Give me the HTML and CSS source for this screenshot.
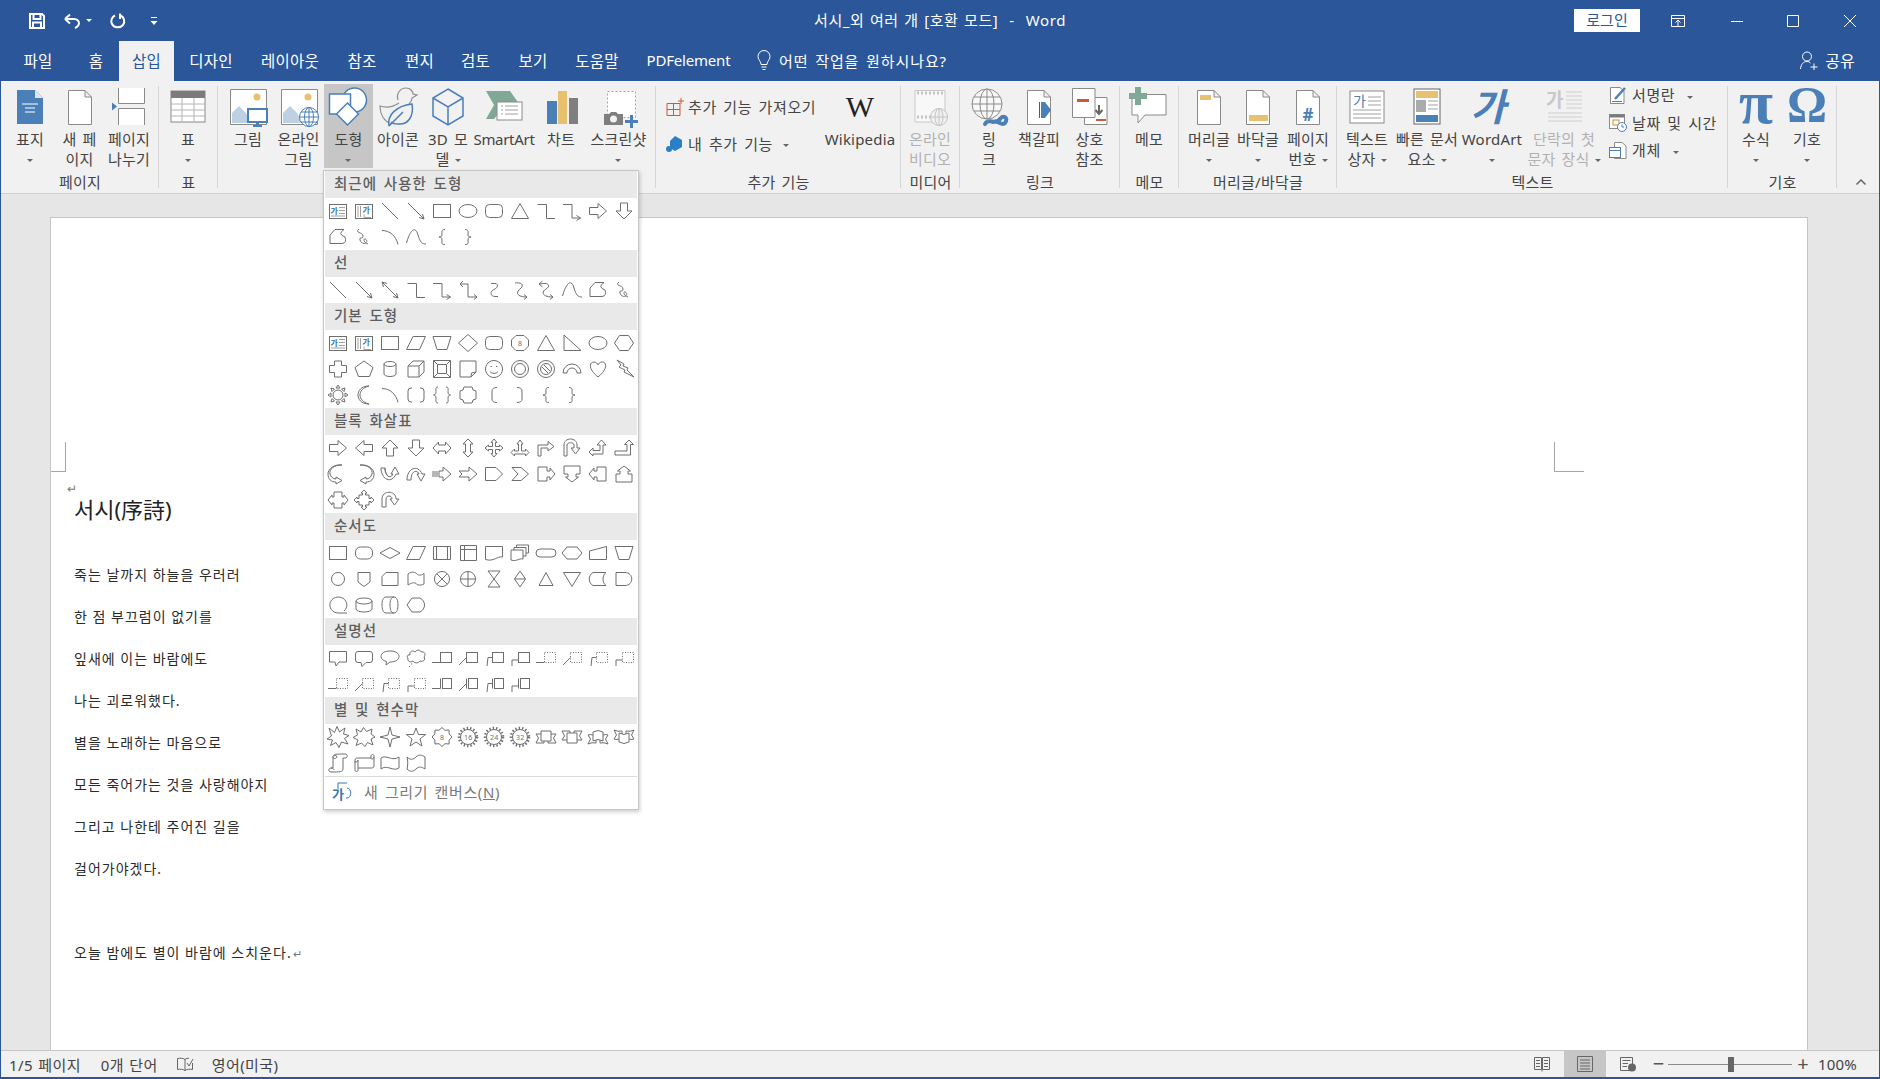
FILE: index.html
```html
<!DOCTYPE html>
<html lang="ko">
<head>
<meta charset="utf-8">
<title>서시_외 여러 개 [호환 모드] - Word</title>
<link rel="stylesheet" href="styles.css">
</head>
<body>
<svg class="defs" xmlns="http://www.w3.org/2000/svg"><defs>
<g id="tb"><rect x="4.5" y="6.5" width="17" height="14" fill="#fff"/><text class="gt" x="5.5" y="15.5">가</text><path class="thin" d="M14 9.5h6M14 12.5h6M14 15.5h6M6 18h14"/></g>
<g id="vtb"><rect x="4.5" y="6.5" width="17" height="14" fill="#fff"/><text class="gt" x="11.5" y="14.5">가</text><path class="thin" d="M7 8v11M9.5 8v11M13 16.500v3h7"/></g>
<path id="line" d="M5 5L21 21"/>
<path id="arrow" d="M5 5L21 21M21 21l-1.500-5M21 21l-5-1.500"/>
<path id="dbl" d="M5 5L21 21M21 21l-1.500-5M21 21l-5-1.500M5 5l1.500 5M5 5l5 1.500"/>
<rect id="rect" x="4.500" y="6.500" width="17" height="13"/>
<ellipse id="ell" cx="13" cy="13" rx="9" ry="6.500"/>
<rect id="rr" x="4.500" y="6.500" width="17" height="13" rx="4"/>
<path id="tri" d="M13 5.500L21.500 20.500H4.500Z"/>
<path id="elb" d="M4.500 6.500H13.500V20.500H22"/>
<path id="elba" d="M4 6.500H13V20H21.500M21.500 20l-4-2.500M21.500 20l-4 2.500"/>
<path id="elbd" d="M5 7H13V20H22M5 7l3-3M5 7l3 3M22 20l-3-2.500M22 20l-3 2.500"/>
<path id="rar" d="M4.500 9.500H13V5.500L21.500 13L13 20.500V16.500H4.500Z"/>
<path id="lar" d="M21.500 9.500H13V5.500L4.500 13L13 20.500V16.500H21.500Z"/>
<path id="uar" d="M9.500 21H16.500V13H21L13 5L5 13H9.500Z"/>
<path id="dar" d="M9.500 5H16.500V13H21L13 21L5 13H9.500Z"/>
<path id="free" d="M5 19.500V11L10 5.500H19Q12 10 20 13Q22 19 17 19.500Z"/>
<path id="scr" d="M8 5C3 9 12 8 12 12C12 16 8 12 9 16C11 22 18 19 15 15.500C13 13 11 18 17 20"/>
<path id="arc" d="M5 6.500C13 6.500 19 12 21 20.500"/>
<path id="cur" d="M3.500 19C8 3 13 3 15 11C17 18 19 20 23 20"/>
<path id="lb" d="M16 5.500C12 5.500 13 8 13 11C13 12.500 12 13 10 13C12 13 13 14 13 16C13 19 12 20.500 16 20.500"/>
<path id="rb" d="M10 5.500C14 5.500 13 8 13 11C13 12.500 14 13 16 13C14 13 13 14 13 16C13 19 14 20.500 10 20.500"/>
<path id="cc" d="M10 6.500H14C18 6.500 17 11 13 12.500C9 14 9 19.500 14 19.500H17"/>
<path id="cca" d="M8 6C16 5 17 9 13 12C9 15 9 20 20 20M20 20l-3-2.500M20 20l-3 2.500"/>
<path id="ccd" d="M7 7C16 5 18 9 13 12C8 15 9 20 20 20M20 20l-3-2.500M20 20l-3 2.500M6 7l3.500-3M6 7l3.500 3"/>
<path id="para" d="M10 6.500H22.500L16.500 19.500H3.500Z"/>
<path id="trap" d="M4 6.500H22L18 19.500H8Z"/>
<path id="dia" d="M13 4.500L22.500 13L13 21.500L3.500 13Z"/>
<g id="oct"><path d="M9 5.500H17L21.500 10V16L17 20.500H9L4.500 16V10Z"/><text class="nt" x="11" y="16">8</text></g>
<path id="rtri" d="M5 5V20.500H22Z"/>
<path id="hex" d="M8.500 5.500H17.500L22.500 13L17.500 20.500H8.500L3.500 13Z"/>
<path id="cross" d="M9.500 5H16.500V9.500H21.500V16.500H16.500V21H9.500V16.500H4.500V9.500H9.500Z"/>
<path id="pent" d="M13 5L22 11.500L18.500 20.500H7.500L4 11.500Z"/>
<path id="can" d="M7 8A6 2.500 0 0 1 19 8V18A6 2.500 0 0 1 7 18ZM7 8A6 2.500 0 0 0 19 8"/>
<path id="cube" d="M5 10L10 5H21V16L16 21H5ZM5 10H16V21M16 10L21 5"/>
<path id="bev" d="M4.500 4.500H21.500V21.500H4.500ZM8.500 8.500H17.500V17.500H8.500ZM4.500 4.500L8.500 8.500M21.500 4.500L17.500 8.500M4.500 21.500L8.500 17.500M21.500 21.500L17.500 17.500"/>
<path id="fold" d="M5 5H21V16L16 21H5ZM21 16L16.500 17L16 21"/>
<path id="smile" d="M13 4.500A8.500 8.500 0 1 1 12.990 4.500ZM9 15.500C11 18 15 18 17 15.500M9.500 10.500h1.500M15 10.500h1.500"/>
<g id="donut"><circle cx="13" cy="13" r="8.500"/><circle cx="13" cy="13" r="5.500"/></g>
<g id="nosym"><circle cx="13" cy="13" r="8.500"/><circle cx="13" cy="13" r="5.500"/><path d="M9 11L15 17M11 9L17 15"/></g>
<path id="barc" d="M4 17A9 9 0 0 1 22 17H18A5 5 0 0 0 8 17Z"/>
<path id="heart" d="M13 21C3 13 4 6 9 6C11 6 13 8 13 9C13 8 15 6 17 6C22 6 23 13 13 21Z"/>
<path id="bolt" d="M6 4L13 8L12 10L17 12L16 14L23 21L13 16L14 14L8 11L10 9Z"/>
<g id="sun"><circle cx="13" cy="13" r="5"/><path d="M13 3l-2 3h4ZM13 23l-2-3h4ZM3 13l3-2v4ZM23 13l-3-2v4ZM6 6l1 3.500L9.500 7ZM20 6l-1 3.500L16.500 7ZM6 20l1-3.500L9.500 19ZM20 20l-1-3.500L16.500 19Z"/></g>
<path id="moon" d="M18 4C6 7 6 19 18 22C10 22 7 17 7 13C7 9 10 4 18 4Z"/>
<path id="bp" d="M9 6H8Q5 6 5 9V17Q5 20 8 20H9M17 6H18Q21 6 21 9V17Q21 20 18 20H17"/>
<path id="bcp" d="M9 5C6 5 7 8 7 10C7 12 6 13 4.500 13C6 13 7 14 7 16C7 18 6 21 9 21M17 5C20 5 19 8 19 10C19 12 20 13 21.500 13C20 13 19 14 19 16C19 18 20 21 17 21"/>
<path id="plq" d="M9 5H17Q17 9 21 9V17Q17 17 17 21H9Q9 17 5 17V9Q9 9 9 5Z"/>
<path id="lbk" d="M16 5.500Q11 5.500 11 9V17Q11 20.500 16 20.500"/>
<path id="rbk" d="M10 5.500Q15 5.500 15 9V17Q15 20.500 10 20.500"/>
<path id="lra" d="M4 13L9.500 7V10H16.500V7L22 13L16.500 19V16H9.500V19Z"/>
<path id="uda" d="M13 4L18 9H15.500V17H18L13 22L8 17H10.500V9H8Z"/>
<path id="quad" d="M13 4L16 7.500H14.500V11.500H18.500V10L22 13L18.500 16V14.500H14.500V18.500H16L13 22L10 18.500H11.500V14.500H7.500V16L4 13L7.500 10V11.500H11.500V7.500H10Z"/>
<path id="lru" d="M13 5L16 9H14.500V16H18.500V14L22 17.500L18.500 21V19H7.500V21L4 17.500L7.500 14V16H11.500V9H10Z"/>
<path id="bent" d="M5 21V10H15V6.500L21 11.500L15 16V13H8V21Z"/>
<path id="ut" d="M5 21V10C5 2 18 2 18 10V13H21L16.500 19L12 13H15V10C15 7 8 7 8 10V21Z"/>
<path id="lu" d="M4 17L8 13V15.500H15V10H12L16.500 5L21 10H18V19H8V21Z"/>
<path id="bu" d="M4 16H16V9.500H13.500L18 5L22.500 9.500H19.500V20H4Z"/>
<path id="cr" d="M17 4C9 4 4 8 5 13C6 16 8 18 11 18V16L17 19.500L11 23V21C6 21 3 18 3 13C3 8 9 3 17 4Z"/>
<path id="cl" d="M9 4C17 4 22 8 21 13C20 16 18 18 15 18V16L9 19.500L15 23V21C20 21 23 18 23 13C23 8 17 3 9 4Z"/>
<path id="cu" d="M4 7C4 19 15 23 19 13H22L18 6L14 13H16C14 18 8 16 8 7ZM8 7C8 12 10 14 12 16"/>
<path id="cd" d="M4 19C4 7 15 3 19 13H22L18 20L14 13H16C14 8 8 10 8 19Z"/>
<path id="str" d="M4 10V16M6 10V16M8 10V16M10 10H14V6L22 13L14 20V16H10Z"/>
<path id="not" d="M4 10H14V6L22 13L14 20V16H4L7 13Z"/>
<path id="hmp" d="M4.500 6.500H15L21.500 13L15 19.500H4.500Z"/>
<path id="chv" d="M5 6.500H14L21.500 13L14 19.500H5L11 13Z"/>
<path id="rc" d="M5 6H14V10H17V7L22 13L17 19V16H14V20H5Z"/>
<path id="dc" d="M5 5H21V13H17V16H19.500L13 21L6.500 16H9V13H5Z"/>
<path id="lc" d="M21 6H12V10H9V7L4 13L9 19V16H12V20H21Z"/>
<path id="uc" d="M5 21H21V13H17V10H19.500L13 5L6.500 10H9V13H5Z"/>
<path id="lrc" d="M9 5H17V10H19V8L23 13L19 18V16H17V21H9V16H7V18L3 13L7 8V10H9Z"/>
<path id="qc" d="M13 3L16 6H14.500V8H18V11.500H20V10L23 13L20 16V14.500H18V18H14.500V20H16L13 23L10 20H11.500V18H8V14.500H6V16L3 13L6 10V11.500H8V8H11.500V6H10Z"/>
<path id="ca" d="M5 20V12C5 3 19 3 19 12H22L17.500 18L13 12H15C15 8 9 8 9 12V20Z"/>
<rect id="frr" x="4.500" y="7" width="17" height="12" rx="5"/>
<path id="fd" d="M3 13L13 7.500L23 13L13 18.500Z"/>
<path id="pre" d="M4.500 6.500H21.500V19.500H4.500ZM7.500 6.500V19.500M18.500 6.500V19.500"/>
<path id="int" d="M5.500 5.500H21.500V20.500H5.500ZM5.500 9.500H21.500M9.500 5.500V20.500"/>
<path id="doc" d="M4.500 6.500H21.500V17C16 16 13 22 4.500 19.500Z"/>
<path id="mdoc" d="M4 10H16V19C12 18 9 22 4 20ZM7 10V7.500H19V16H16M9.500 7.500V5H21.500V13H19"/>
<rect id="term" x="3" y="9" width="20" height="8" rx="4"/>
<path id="prep" d="M8 7H18L23 13L18 19H8L3 13Z"/>
<path id="mi" d="M4.500 11L21.500 6.500V19.500H4.500Z"/>
<circle id="conn" cx="13" cy="13" r="6.500"/>
<path id="off" d="M7 6.500H19V16L13 20.500L7 16Z"/>
<path id="card" d="M9 6.500H21V19.500H5V10.500Z"/>
<path id="tape" d="M5 8C9 5 12 6 14 8C16 10 19 9 21 7.500V18C17 20 14 19 13 17.500C11 16 8 17 5 19Z"/>
<path id="sum" d="M13 5.500A7.500 7.500 0 1 1 12.990 5.500ZM7.700 7.700L18.300 18.300M18.300 7.700L7.700 18.300"/>
<path id="or" d="M13 5.500A7.500 7.500 0 1 1 12.990 5.500ZM13 5.500V20.500M5.500 13H20.500"/>
<path id="col" d="M7 5H19L7 21H19Z"/>
<path id="sort" d="M13 5L18.500 13L13 21L7.500 13ZM7.500 13H18.500"/>
<path id="ext" d="M13 6.500L20 19.500H6Z"/>
<path id="mrg" d="M4.500 6.500H21.500L13 20.500Z"/>
<path id="sto" d="M8 6.500H21C17 9 17 17 21 19.500H8C3 17 3 9 8 6.500Z"/>
<path id="del" d="M5 6.500H14C23 6.500 23 19.500 14 19.500H5Z"/>
<path id="seq" d="M19 19A8.500 8 0 1 0 13 21H22"/>
<path id="dsk" d="M5 9A8 3 0 0 1 21 9V17A8 3 0 0 1 5 17ZM5 9A8 3 0 0 0 21 9"/>
<path id="dir" d="M9 5H17C20 5 21 9 21 13C21 17 20 21 17 21H9C6 21 5 17 5 13C5 9 6 5 9 5ZM17 5C14 5 13 9 13 13C13 17 14 21 17 21"/>
<path id="dsp" d="M9 6H17C23 9 23 17 17 20H9L4 13Z"/>
<path id="wr" d="M4.500 6.500H21.500V17H14L11 21L10 17H4.500Z"/>
<path id="wrr" d="M7 6.500H19Q21.500 6.500 21.500 9V15Q21.500 17.500 19 17.500H15L11 21.500L10 17.500H7Q4.500 17.500 4.500 15V9Q4.500 6.500 7 6.500Z"/>
<path id="wo" d="M13 6C19 6 22 8.500 22 11.500C22 15 18 17 13 17L9 20L9.500 16.500C6 15.500 4 14 4 11.500C4 8.500 7 6 13 6Z"/>
<g id="cld"><path d="M7 10C6 6 10 5 12 7C14 4 18 5 18 7C22 6 23 10 21 12C23 15 20 17 17 16C15 19 11 18 10 16C7 18 4 16 5 13C3 12 5 9 7 10Z"/><path d="M8 19h1M6 21.500h1"/></g>
<g id="l1"><rect x="11.500" y="7.500" width="11" height="10"/><path d="M3 17.500H11.500"/></g>
<g id="l2"><rect x="11.500" y="7.500" width="11" height="10"/><path d="M4 20L11.500 12.500"/></g>
<g id="l3"><rect x="11.500" y="7.500" width="11" height="10"/><path d="M6 21L7 12.500H11.500"/></g>
<g id="l4"><rect x="11.500" y="7.500" width="11" height="10"/><path d="M5 21V15H11.500"/></g>
<g id="d1"><rect class="dot" x="11.500" y="7.500" width="11" height="10"/><path d="M3 17.500H11.500"/></g>
<g id="d2"><rect class="dot" x="11.500" y="7.500" width="11" height="10"/><path d="M4 20L11.500 12.500"/></g>
<g id="d3"><rect class="dot" x="11.500" y="7.500" width="11" height="10"/><path d="M6 21L7 12.500H11.500"/></g>
<g id="d4"><rect class="dot" x="11.500" y="7.500" width="11" height="10"/><path d="M5 21V15H11.500"/></g>
<g id="a1"><rect x="13.500" y="7.500" width="9" height="10"/><path d="M11.500 7.500V17.500M3 17.500H11.500"/></g>
<g id="a2"><rect x="13.500" y="7.500" width="9" height="10"/><path d="M11.500 7.500V17.500M4 20L11.500 12.500"/></g>
<g id="a3"><rect x="13.500" y="7.500" width="9" height="10"/><path d="M11.500 7.500V17.500M6 21L7 12.500H11.500"/></g>
<g id="a4"><rect x="13.500" y="7.500" width="9" height="10"/><path d="M11.500 7.500V17.500M5 21V15H11.500"/></g>
<path id="e1" d="M4 4L9.500 8.500L12 2.500L14.500 8L20 4L18.500 10L24 11.500L19.500 14.500L23 20L16.500 18L14 23.500L11 18.500L5.500 21.500L7.500 16L2 15L6.500 12Z"/>
<path id="e2" d="M5 5L10 8L12.500 3.500L15.500 7.500L21 5L20 10L24 13L20 15L22 21L16.500 18.500L14 22.500L10.500 19L5 21.500L7 16L2 13.500L6.500 11Z"/>
<path id="s4" d="M13 3L15 11L23 13L15 15L13 23L11 15L3 13L11 11Z"/>
<path id="s5" d="M13 4L15.500 10.500H22.500L17 15L19 22L13 18L7 22L9 15L3.500 10.500H10.500Z"/>
<g id="s8"><path d="M13 3.500L16 6.300L20 6L20.200 10L23 13L20.200 16L20 20L16 19.700L13 22.500L10 19.700L6 20L5.800 16L3 13L5.800 10L6 6L10 6.300Z"/><text class="nt" x="11" y="16">8</text></g>
<g id="s16"><circle cx="13" cy="13" r="7.500"/><circle class="ring" cx="13" cy="13" r="9"/><text class="nt" x="9" y="16">16</text></g>
<g id="s24"><circle cx="13" cy="13" r="7.500"/><circle class="ring" cx="13" cy="13" r="9"/><text class="nt" x="9" y="16">24</text></g>
<g id="s32"><circle cx="13" cy="13" r="7.500"/><circle class="ring" cx="13" cy="13" r="9"/><text class="nt" x="9" y="16">32</text></g>
<path id="ru" d="M8 7H18V17H8ZM8 10H3L5.500 14L3 19H11V17M18 10H23L20.500 14L23 19H15V17"/>
<path id="rd" d="M8 9H18V19H8ZM8 16H3L5.500 12L3 7H11V9M18 16H23L20.500 12L23 7H15V9"/>
<path id="cru" d="M8 8Q13 5 18 8V17Q13 14 8 17ZM8 11Q5 10 3 11L5.500 15L3 20Q7 18 11 19V16M18 11Q21 10 23 11L20.500 15L23 20Q19 18 15 19V16"/>
<path id="crd" d="M8 9Q13 12 18 9V18Q13 21 8 18ZM8 15Q5 16 3 15L5.500 11L3 6Q7 8 11 7V10M18 15Q21 16 23 15L20.500 11L23 6Q19 8 15 7V10"/>
<path id="vs" d="M8 7C8 4 11 4 20 4C23 4 23 8 20 8H18V19C18 22 15 22 6 22C3 22 3 18 6 18H8ZM8 7C8 9 11 9 12 7C12 5.500 10 5 9 6M6 18C8 18 9 19 9 20"/>
<path id="hs" d="M4 10C4 8 6 8 8 8H20V6C20 4 23 4 23 6V16C23 18 21 18 19 18H7V20C7 22 4 22 4 20ZM20 8C20 10 23 9 23 7M4 11C4 13 7 12 7 10V18"/>
<path id="wav" d="M4 8C9 4 15 12 22 7V18C16 22 10 14 4 19Z"/>
<path id="dw" d="M4 7C7 10 10 10 13 7C16 4 19 5 22 7V19C19 17 16 16 13 19C10 22 7 22 4 19C5 15 5 11 4 7Z"/>
</defs></svg>

<div class="app">
  <header class="titlebar">
    <div class="qat">
      <svg class="q1" width="18" height="18" viewBox="0 0 18 18"><path class="wh2" d="M2 2H14L16 4V16H2ZM5.500 2V7H12.500V2M5 16V10.500H13V16"/></svg>
      <svg class="q2" width="20" height="18" viewBox="0 0 20 18"><path class="wh2" d="M3 7H12C16 7 17 10 17 11C17 14 15 15 13 16M3 7L8 2.500M3 7L8 11.500"/></svg>
      <i class="caret white q3"></i>
      <svg class="q4" width="18" height="18" viewBox="0 0 18 18"><path class="wh2" d="M6 3.500C2.500 5 1.500 9 3 12C5 16 11 16.500 14 13C16.500 9.500 15 5 11.500 3.500M11 1.500V7"/></svg>
      <svg class="q5" width="10" height="12" viewBox="0 0 10 12"><path class="wh" d="M2 2.500H8"/><path fill="#fff" d="M1.500 6H8.500L5 10Z"/></svg>
    </div>
    <div class="doctitle">서시_외 여러 개 [호환 모드]&nbsp; -&nbsp; Word</div>
    <div class="winctl">
      <button class="login">로그인</button>
      <svg class="w1" width="18" height="16" viewBox="0 0 18 16"><path class="wh" d="M2.500 2.500H15.500V13.500H2.500ZM3 5.500H15M9 13V7M6.500 9.500L9 7L11.500 9.500"/></svg>
      <svg class="w2" width="14" height="14" viewBox="0 0 14 14"><path class="wh" d="M1 7.500H13"/></svg>
      <svg class="w3" width="14" height="14" viewBox="0 0 14 14"><path class="wh" d="M1.500 1.500H12.500V12.500H1.500Z"/></svg>
      <svg class="w4" width="14" height="14" viewBox="0 0 14 14"><path class="wh" d="M1 1L13 13M13 1L1 13"/></svg>
    </div>
  </header>

  <nav class="tabs">
    <span class="tab t1">파일</span><span class="tab t2">홈</span><span class="tab t3 active">삽입</span><span class="tab t4">디자인</span><span class="tab t5">레이아웃</span><span class="tab t6">참조</span><span class="tab t7">편지</span><span class="tab t8">검토</span><span class="tab t9">보기</span><span class="tab t10">도움말</span><span class="tab t11">PDFelement</span>
    <span class="tell"><svg width="16" height="22" viewBox="0 0 16 22"><path class="wh" d="M5 15.500C5 12 2 11 2 7.500A6 6 0 0 1 14 7.500C14 11 11 12 11 15.500ZM5.500 18H10.500M6.500 20.500H9.500"/></svg>어떤 작업을 원하시나요?</span>
    <span class="share"><svg width="20" height="22" viewBox="0 0 20 22"><path class="wh" d="M8 3A4.500 4.500 0 0 1 8 12A4.500 4.500 0 0 1 8 3ZM1.500 20C2 15 4.500 12.500 8 12.500C9.500 12.500 10.500 13 11.500 14M15 14.500V21M11.500 18H18.500"/></svg>공유</span>
  </nav>

  <section class="ribbon">
    <div class="group g1">
      <div class="btns p4">
        <div class="btn b50"><svg class="ic" viewBox="0 0 48 45"><path fill="#4a7fb8" d="M11 6H29L37 14V40H11Z"/><path fill="#dfe8f2" d="M29 6L37 14H29Z"/><path class="wl" d="M16 20H32M19 24H29M19 28H29"/></svg><span class="lb">표지<br><i class="caret"></i></span></div>
        <div class="btn b49"><svg class="ic" viewBox="0 0 48 45"><path class="pg" d="M12.500 6.500H29L35.500 13V40.500H12.500ZM29 6.500V13H35.500"/></svg><span class="lb">새 페<br>이지</span></div>
        <div class="btn b50"><svg class="ic" viewBox="0 0 48 45"><path class="pg" d="M13.500 4V19.500H39.500V4M13.500 41V24.500H39.500V41"/><path fill="#4a7fb8" d="M7 18.500L12 22.500L7 26.500Z"/></svg><span class="lb">페이지<br>나누기</span></div>
      </div>
      <div class="gl">페이지</div>
    </div>
    <div class="group g2">
      <div class="btns">
        <div class="btn b58"><svg class="ic" viewBox="0 0 48 45"><rect x="7" y="7" width="34" height="31" fill="#fff" stroke="#8a8a8a"/><rect x="7" y="7" width="34" height="7" fill="#7b7b7b"/><path class="gr" d="M7 20H41M7 26H41M7 32H41M18 14V38M30 14V38"/></svg><span class="lb">표<br><i class="caret"></i></span></div>
      </div>
      <div class="gl">표</div>
    </div>
    <div class="group g3">
      <div class="btns p5">
        <div class="btn b50"><svg class="ic" viewBox="0 0 48 45"><path class="pg" d="M6.500 5.500H42.500V40.500H6.500Z"/><circle cx="33" cy="13" r="3.500" fill="#e8c170"/><path fill="#bdd0e4" d="M8 39V29L15 22L22 29L27 39Z"/><rect x="24" y="25" width="19" height="13" fill="#fff" stroke="#4a7fb8" stroke-width="2"/><path fill="#4a7fb8" d="M32 38h3v3h3v2H29v-2h3Z"/></svg><span class="lb">그림</span></div>
        <div class="btn b51"><svg class="ic" viewBox="0 0 48 45"><path class="pg" d="M6.500 5.500H42.500V40.500H6.500Z"/><circle cx="33" cy="13" r="3.500" fill="#e8c170"/><path fill="#bdd0e4" d="M8 39V29L15 22L22 29L27 39Z"/><g class="gb"><circle cx="34" cy="33" r="9.500" fill="#fff"/><ellipse cx="34" cy="33" rx="4.500" ry="9.500"/><path d="M24.500 33H43.500M26 28H42M26 38H42M34 23.500V42.500"/></g></svg><span class="lb">온라인<br>그림</span></div>
        <div class="btn b49 sel"><svg class="ic" viewBox="0 0 48 45"><g class="blue"><circle cx="29.500" cy="16" r="12" fill="#fff"/><rect x="4.500" y="10" width="21" height="20" fill="#fff"/><path fill="#fff" d="M22.500 19L33.500 30L22.500 41L11.500 30Z"/></g></svg><span class="lb">도형<br><i class="caret"></i></span></div>
        <div class="btn b50"><svg class="ic" viewBox="0 0 48 45"><path fill="none" stroke="#8f8f8f" stroke-width="1.200" d="M24 16C22 10 26 4 32 4C37 4 39 8 39 10L43 11L38 14C38 17 36 19 35 20M25 19C19 23 12 24 6 22C6 30 10 37 17 40"/><path fill="#f1f1f1" stroke="#4a7fb8" stroke-width="1.500" d="M15 42C13 31 22 22 38 20C40 31 35 41 24 40C21 40 18 39 17 38M15 42L29 28"/></svg><span class="lb">아이콘</span></div>
        <div class="btn b50"><svg class="ic" viewBox="0 0 48 45"><path class="blue" d="M24 5L39 14V32L24 41L9 32V14ZM9 14L24 23L39 14M24 23V41"/></svg><span class="lb">3D 모<br>델<i class="caret ml"></i></span></div>
        <div class="btn b62"><svg class="ic" viewBox="0 0 48 45"><path fill="#7fa896" d="M6 7H30L40 21H14L6 7ZM14 21H26L14 35H6Z"/><rect x="17" y="18" width="25" height="18" fill="#fff" stroke="#8a8a8a"/><path class="thin" d="M25 22H38M25 26H38M25 30H38M21 22H23M21 26H23M21 30H23"/></svg><span class="lb lat2">SmartArt</span></div>
        <div class="btn b52"><svg class="ic" viewBox="0 0 48 45"><rect x="10" y="17" width="10" height="23" fill="#4a7fb8"/><rect x="21" y="7" width="9" height="33" fill="#e8c170"/><rect x="32" y="14" width="9" height="26" fill="#7f7f7f"/></svg><span class="lb">차트</span></div>
        <div class="btn b63"><svg class="ic" viewBox="0 0 48 45"><rect class="dash" x="12.500" y="7.500" width="28" height="26"/><path fill="#7f7f7f" d="M9 30H14L16 28H21L23 30H28V41H9Z"/><circle cx="18.500" cy="35" r="3.500" fill="#f1f1f1"/><path fill="#4a7fb8" d="M35 31h3v5h5v3h-5v5h-3v-5h-5v-3h5Z"/></svg><span class="lb">스크린샷<br><i class="caret"></i></span></div>
      </div>
      <div class="gl">&nbsp;</div>
    </div>
    <div class="group g4">
      <div class="btns p9">
        <div class="col170">
          <div class="srow"><svg width="20" height="20" viewBox="0 0 20 20"><path class="red" d="M2 6.500H15V18.500H2ZM2 12.500H15M8.500 6.500V18.500M16 1V7M13 4H19"/></svg><span class="st">추가 기능 가져오기</span></div>
          <div class="srow"><svg width="20" height="20" viewBox="0 0 20 20"><path fill="#2a7fc6" d="M10 2L17 6V13L10 17L5 14V7Z"/><circle cx="4" cy="15" r="3" fill="#2a7fc6"/></svg><span class="st">내 추가 기능<i class="caret ml2"></i></span></div>
        </div>
        <div class="btn b50"><div class="ic wiki">W</div><span class="lb lat">Wikipedia</span></div>
      </div>
      <div class="gl">추가 기능</div>
    </div>
    <div class="group g5">
      <div class="btns">
        <div class="btn b58 off"><svg class="ic" viewBox="0 0 48 45"><path fill="#f8f8f8" stroke="#c8c8c8" d="M9 6.500H39V38H9Z"/><path class="dashg" d="M11 9H37M11 33H37"/><g class="gbg"><circle cx="33" cy="33" r="8.500" fill="#f1f1f1"/><ellipse cx="33" cy="33" rx="4" ry="8.500"/><path d="M24.500 33H41.500M33 24.500V41.500"/></g></svg><span class="lb">온라인<br>비디오</span></div>
      </div>
      <div class="gl">미디어</div>
    </div>
    <div class="group g6">
      <div class="btns p4">
        <div class="btn b50"><svg class="ic" viewBox="0 0 48 45"><g fill="#f8f8f8" stroke="#8a8a8a"><circle cx="22" cy="20" r="15"/><ellipse cx="22" cy="20" rx="7" ry="15"/><path d="M7 20H37M9 13H35M9 27H35M22 5V35"/></g><path fill="none" stroke="#4a7fb8" stroke-width="4" stroke-linecap="round" d="M20 40C24 33 30 42 35 35C38 31 44 33 40 39C37 43 32 35 28 38"/></svg><span class="lb">링<br>크</span></div>
        <div class="btn b50"><svg class="ic" viewBox="0 0 48 45"><path class="pg" d="M12.500 6.500H29L35.500 13V40.500H12.500ZM29 6.500V13H35.500"/><path stroke="#5a5a5a" d="M24.500 18V34"/><path fill="#4a7fb8" d="M26 18H30L36 26L30 34H26Z"/></svg><span class="lb">책갈피</span></div>
        <div class="btn b51"><svg class="ic" viewBox="0 0 48 45"><path class="pg" d="M18.500 13.500H41V40.500H18.500Z"/><path class="pg" d="M6.500 4.500H29V33.500H6.500Z"/><path fill="#d0583a" d="M11 15H23V18H11ZM30 35H40V37H30Z"/><path fill="none" stroke="#666" stroke-width="2" d="M33 21V29M29.500 26L33 30L36.500 26"/></svg><span class="lb">상호<br>참조</span></div>
      </div>
      <div class="gl">링크</div>
    </div>
    <div class="group g5">
      <div class="btns">
        <div class="btn b58"><svg class="ic" viewBox="0 0 48 45"><path class="pg" d="M12 10.500H41V31H20L13 39V31H7V15"/><path fill="#7fa896" d="M10 3H16V9H22V15H16V21H10V15H4V9H10Z"/></svg><span class="lb">메모</span></div>
      </div>
      <div class="gl">메모</div>
    </div>
    <div class="group g7">
      <div class="btns p5">
        <div class="btn b50"><svg class="ic" viewBox="0 0 48 45"><path class="pg" d="M12.500 6.500H29L35.500 13V40.500H12.500ZM29 6.500V13H35.500"/><rect x="15" y="11" width="11" height="5" fill="#e8c170"/></svg><span class="lb">머리글<br><i class="caret"></i></span></div>
        <div class="btn b48"><svg class="ic" viewBox="0 0 48 45"><path class="pg" d="M12.500 6.500H29L35.500 13V40.500H12.500ZM29 6.500V13H35.500"/><rect x="15" y="31" width="19" height="6" fill="#e8c170"/></svg><span class="lb">바닥글<br><i class="caret"></i></span></div>
        <div class="btn b52"><svg class="ic" viewBox="0 0 48 45"><path class="pg" d="M12.500 6.500H29L35.500 13V40.500H12.500ZM29 6.500V13H35.500"/><text class="hash" x="24" y="37">#</text></svg><span class="lb">페이지<br>번호<i class="caret ml"></i></span></div>
      </div>
      <div class="gl">머리글/바닥글</div>
    </div>
    <div class="group g8">
      <div class="btns p3">
        <div class="btn b54"><svg class="ic" viewBox="0 0 48 45"><rect x="7" y="7" width="34" height="32" fill="#fff" stroke="#8a8a8a"/><text class="ga" x="10" y="22">가</text><path class="thin" d="M25 13H38M25 17H38M25 21H38M10 26H38M10 30H38M10 34H38"/></svg><span class="lb">텍스트<br>상자<i class="caret ml"></i></span></div>
        <div class="btn b66"><svg class="ic" viewBox="0 0 48 45"><rect x="11" y="5" width="26" height="35" fill="#fff" stroke="#666"/><rect x="13" y="7" width="22" height="7" fill="#e8c170"/><rect x="13" y="16" width="10" height="12" fill="#ababab"/><path class="thin" d="M25 17H35M25 21H35M25 25H35"/><rect x="13" y="31" width="22" height="7" fill="#4a7fb8"/></svg><span class="lb">빠른 문서<br>요소<i class="caret ml"></i></span></div>
        <div class="btn b64"><div class="ic wa">가</div><span class="lb">WordArt<br><i class="caret"></i></span></div>
        <div class="btn b80 off"><svg class="ic" viewBox="0 0 48 45"><text class="ga2" x="6" y="23">가</text><path class="thg" d="M26 8H42M26 12H42M26 16H42M26 20H42M26 24H42M8 29H42M8 33H42M8 37H42"/></svg><span class="lb">단락의 첫<br>문자 장식<i class="caret ml"></i></span></div>
        <div class="col3">
          <div class="srow2"><svg width="20" height="20" viewBox="0 0 20 20"><path class="pg" d="M2.500 2.500H12L16 6V18.500H2.500Z"/><path fill="none" stroke="#4a7fb8" stroke-width="2.500" d="M7 14L17 3"/><path stroke="#4a7fb8" d="M4 16.500H14"/></svg><span class="st">서명란<i class="caret ml3"></i></span></div>
          <div class="srow2"><svg width="20" height="20" viewBox="0 0 20 20"><rect x="1.500" y="2.500" width="15" height="14" fill="#fff" stroke="#8a8a8a"/><rect x="1.500" y="2.500" width="15" height="3" fill="#7b7b7b"/><rect x="5" y="8" width="6" height="5" fill="none" stroke="#d98a2c"/><circle cx="14" cy="15" r="4.500" fill="#fff" stroke="#4a7fb8"/><path stroke="#4a7fb8" fill="none" d="M14 12.500V15H16"/></svg><span class="st">날짜 및 시간</span></div>
          <div class="srow2"><svg width="20" height="20" viewBox="0 0 20 20"><path class="pg" d="M6.500 2.500H14L18 6V18.500H6.500Z"/><rect x="1.500" y="7.500" width="11" height="10" fill="#fff" stroke="#4a7fb8"/><path stroke="#4a7fb8" d="M2 10.500H12"/></svg><span class="st">개체<i class="caret ml3"></i></span></div>
        </div>
      </div>
      <div class="gl">텍스트</div>
    </div>
    <div class="group g9">
      <div class="btns p5">
        <div class="btn b46"><div class="ic sym pi">π</div><span class="lb">수식<br><i class="caret"></i></span></div>
        <div class="btn b56"><div class="ic sym">Ω</div><span class="lb">기호<br><i class="caret"></i></span></div>
      </div>
      <div class="gl">기호</div>
    </div>
    <svg class="collapse" width="12" height="8" viewBox="0 0 12 8"><path fill="none" stroke="#666" stroke-width="1.500" d="M1.500 6.500L6 2L10.500 6.500"/></svg>
  </section>

  <main class="docarea">
    <article class="page">
      <i class="crop cropl"></i><i class="crop cropr"></i>
      <div class="mark">↵</div>
      <h1 class="head">서시(序詩)</h1>
      <p class="ln">죽는 날까지 하늘을 우러러</p>
      <p class="ln">한 점 부끄럼이 없기를</p>
      <p class="ln">잎새에 이는 바람에도</p>
      <p class="ln">나는 괴로워했다.</p>
      <p class="ln">별을 노래하는 마음으로</p>
      <p class="ln">모든 죽어가는 것을 사랑해야지</p>
      <p class="ln">그리고 나한테 주어진 길을</p>
      <p class="ln">걸어가야겠다.</p>
      <p class="ln"></p>
      <p class="ln">오늘 밤에도 별이 바람에 스치운다.<span class="mark2">↵</span></p>
    </article>
  </main>

  <footer class="status">
    <span class="s1">1/5 페이지</span><span class="s2">0개 단어</span>
    <svg class="s3" width="18" height="16" viewBox="0 0 18 16"><path class="gi" d="M9 3.500C7 2 4 2 1.500 2.500V13.500C4 13 7 13 9 14.500V3.500M9 3.500C10 2.500 12 2.200 13 2.200M16.500 7V13.500C14 13 11 13 9 14.500M11 7L13 10L17 3"/></svg>
    <span class="s4">영어(미국)</span>
    <div class="sright">
      <svg class="r1" width="18" height="16" viewBox="0 0 18 16"><path class="gi" d="M1.500 1.500H8.500V13.500H1.500ZM9.500 1.500H16.500V13.500H9.500ZM3 4.500H7M3 7.500H7M3 10.500H7M11 4.500H15M11 7.500H15M11 10.500H15M9 13.500V15.500"/></svg>
      <div class="viewsel"><svg width="18" height="16" viewBox="0 0 18 16"><path class="gi" d="M1.500 .5H16.500V15.500H1.500ZM4 4H14M4 7H14M4 10H14M4 13H14"/></svg></div>
      <svg class="r3" width="18" height="16" viewBox="0 0 18 16"><path class="gi" d="M1.500 1.500H13.500V14.500H1.500ZM3.500 4.500H11.500M3.500 7.500H9M3.500 10.500H8"/><circle cx="13" cy="11.500" r="4" fill="#666"/></svg>
      <span class="zm">−</span>
      <div class="slider"><i class="thumb"></i></div>
      <span class="zp">+</span>
      <span class="pct">100%</span>
    </div>
  </footer>

  <div class="menu">
    <div class="mh">최근에 사용한 도형</div>
    <div class="mg"><svg class="sh"><use href="#tb"/></svg><svg class="sh"><use href="#vtb"/></svg><svg class="sh"><use href="#line"/></svg><svg class="sh"><use href="#arrow"/></svg><svg class="sh"><use href="#rect"/></svg><svg class="sh"><use href="#ell"/></svg><svg class="sh"><use href="#rr"/></svg><svg class="sh"><use href="#tri"/></svg><svg class="sh"><use href="#elb"/></svg><svg class="sh"><use href="#elba"/></svg><svg class="sh"><use href="#rar"/></svg><svg class="sh"><use href="#dar"/></svg>
    <svg class="sh"><use href="#free"/></svg><svg class="sh"><use href="#scr"/></svg><svg class="sh"><use href="#arc"/></svg><svg class="sh"><use href="#cur"/></svg><svg class="sh"><use href="#lb"/></svg><svg class="sh"><use href="#rb"/></svg></div>
    <div class="mh">선</div>
    <div class="mg"><svg class="sh"><use href="#line"/></svg><svg class="sh"><use href="#arrow"/></svg><svg class="sh"><use href="#dbl"/></svg><svg class="sh"><use href="#elb"/></svg><svg class="sh"><use href="#elba"/></svg><svg class="sh"><use href="#elbd"/></svg><svg class="sh"><use href="#cc"/></svg><svg class="sh"><use href="#cca"/></svg><svg class="sh"><use href="#ccd"/></svg><svg class="sh"><use href="#cur"/></svg><svg class="sh"><use href="#free"/></svg><svg class="sh"><use href="#scr"/></svg></div>
    <div class="mh">기본 도형</div>
    <div class="mg"><svg class="sh"><use href="#tb"/></svg><svg class="sh"><use href="#vtb"/></svg><svg class="sh"><use href="#rect"/></svg><svg class="sh"><use href="#para"/></svg><svg class="sh"><use href="#trap"/></svg><svg class="sh"><use href="#dia"/></svg><svg class="sh"><use href="#rr"/></svg><svg class="sh"><use href="#oct"/></svg><svg class="sh"><use href="#tri"/></svg><svg class="sh"><use href="#rtri"/></svg><svg class="sh"><use href="#ell"/></svg><svg class="sh"><use href="#hex"/></svg>
    <svg class="sh"><use href="#cross"/></svg><svg class="sh"><use href="#pent"/></svg><svg class="sh"><use href="#can"/></svg><svg class="sh"><use href="#cube"/></svg><svg class="sh"><use href="#bev"/></svg><svg class="sh"><use href="#fold"/></svg><svg class="sh"><use href="#smile"/></svg><svg class="sh"><use href="#donut"/></svg><svg class="sh"><use href="#nosym"/></svg><svg class="sh"><use href="#barc"/></svg><svg class="sh"><use href="#heart"/></svg><svg class="sh"><use href="#bolt"/></svg>
    <svg class="sh"><use href="#sun"/></svg><svg class="sh"><use href="#moon"/></svg><svg class="sh"><use href="#arc"/></svg><svg class="sh"><use href="#bp"/></svg><svg class="sh"><use href="#bcp"/></svg><svg class="sh"><use href="#plq"/></svg><svg class="sh"><use href="#lbk"/></svg><svg class="sh"><use href="#rbk"/></svg><svg class="sh"><use href="#lb"/></svg><svg class="sh"><use href="#rb"/></svg></div>
    <div class="mh">블록 화살표</div>
    <div class="mg"><svg class="sh"><use href="#rar"/></svg><svg class="sh"><use href="#lar"/></svg><svg class="sh"><use href="#uar"/></svg><svg class="sh"><use href="#dar"/></svg><svg class="sh"><use href="#lra"/></svg><svg class="sh"><use href="#uda"/></svg><svg class="sh"><use href="#quad"/></svg><svg class="sh"><use href="#lru"/></svg><svg class="sh"><use href="#bent"/></svg><svg class="sh"><use href="#ut"/></svg><svg class="sh"><use href="#lu"/></svg><svg class="sh"><use href="#bu"/></svg>
    <svg class="sh"><use href="#cr"/></svg><svg class="sh"><use href="#cl"/></svg><svg class="sh"><use href="#cu"/></svg><svg class="sh"><use href="#cd"/></svg><svg class="sh"><use href="#str"/></svg><svg class="sh"><use href="#not"/></svg><svg class="sh"><use href="#hmp"/></svg><svg class="sh"><use href="#chv"/></svg><svg class="sh"><use href="#rc"/></svg><svg class="sh"><use href="#dc"/></svg><svg class="sh"><use href="#lc"/></svg><svg class="sh"><use href="#uc"/></svg>
    <svg class="sh"><use href="#lrc"/></svg><svg class="sh"><use href="#qc"/></svg><svg class="sh"><use href="#ca"/></svg></div>
    <div class="mh">순서도</div>
    <div class="mg"><svg class="sh"><use href="#rect"/></svg><svg class="sh"><use href="#frr"/></svg><svg class="sh"><use href="#fd"/></svg><svg class="sh"><use href="#para"/></svg><svg class="sh"><use href="#pre"/></svg><svg class="sh"><use href="#int"/></svg><svg class="sh"><use href="#doc"/></svg><svg class="sh"><use href="#mdoc"/></svg><svg class="sh"><use href="#term"/></svg><svg class="sh"><use href="#prep"/></svg><svg class="sh"><use href="#mi"/></svg><svg class="sh"><use href="#trap"/></svg>
    <svg class="sh"><use href="#conn"/></svg><svg class="sh"><use href="#off"/></svg><svg class="sh"><use href="#card"/></svg><svg class="sh"><use href="#tape"/></svg><svg class="sh"><use href="#sum"/></svg><svg class="sh"><use href="#or"/></svg><svg class="sh"><use href="#col"/></svg><svg class="sh"><use href="#sort"/></svg><svg class="sh"><use href="#ext"/></svg><svg class="sh"><use href="#mrg"/></svg><svg class="sh"><use href="#sto"/></svg><svg class="sh"><use href="#del"/></svg>
    <svg class="sh"><use href="#seq"/></svg><svg class="sh"><use href="#dsk"/></svg><svg class="sh"><use href="#dir"/></svg><svg class="sh"><use href="#dsp"/></svg></div>
    <div class="mh">설명선</div>
    <div class="mg"><svg class="sh"><use href="#wr"/></svg><svg class="sh"><use href="#wrr"/></svg><svg class="sh"><use href="#wo"/></svg><svg class="sh"><use href="#cld"/></svg><svg class="sh"><use href="#l1"/></svg><svg class="sh"><use href="#l2"/></svg><svg class="sh"><use href="#l3"/></svg><svg class="sh"><use href="#l4"/></svg><svg class="sh"><use href="#d1"/></svg><svg class="sh"><use href="#d2"/></svg><svg class="sh"><use href="#d3"/></svg><svg class="sh"><use href="#d4"/></svg>
    <svg class="sh"><use href="#d1"/></svg><svg class="sh"><use href="#d2"/></svg><svg class="sh"><use href="#d3"/></svg><svg class="sh"><use href="#d4"/></svg><svg class="sh"><use href="#a1"/></svg><svg class="sh"><use href="#a2"/></svg><svg class="sh"><use href="#a3"/></svg><svg class="sh"><use href="#a4"/></svg></div>
    <div class="mh">별 및 현수막</div>
    <div class="mg"><svg class="sh"><use href="#e1"/></svg><svg class="sh"><use href="#e2"/></svg><svg class="sh"><use href="#s4"/></svg><svg class="sh"><use href="#s5"/></svg><svg class="sh"><use href="#s8"/></svg><svg class="sh"><use href="#s16"/></svg><svg class="sh"><use href="#s24"/></svg><svg class="sh"><use href="#s32"/></svg><svg class="sh"><use href="#ru"/></svg><svg class="sh"><use href="#rd"/></svg><svg class="sh"><use href="#cru"/></svg><svg class="sh"><use href="#crd"/></svg>
    <svg class="sh"><use href="#vs"/></svg><svg class="sh"><use href="#hs"/></svg><svg class="sh"><use href="#wav"/></svg><svg class="sh"><use href="#dw"/></svg></div>
    <div class="mf"><svg class="fi" width="24" height="24" viewBox="0 0 24 24"><path fill="none" stroke="#3a76b0" d="M7 9V3H16M16 8C21 8 21 18 16 18H15"/><text class="fg" x="1" y="19">가</text></svg><span>새 그리기 캔버스(<u>N</u>)</span></div>
  </div>
</div>
</body>
</html>
```
FILE: styles.css
```css
* { box-sizing: border-box; }
html, body { margin: 0; padding: 0; height: 100%; overflow: hidden; }
body { font-family: "Noto Sans", "Noto Sans CJK KR", sans-serif; color: #444; font-size: 15px; letter-spacing: .2px; word-spacing: 2px; }
.defs { display: none; }
.app { position: relative; display: flex; flex-direction: column; width: 1880px; height: 1079px; background: #e6e6e6; border-left: 1px solid #2b579a; border-right: 1px solid #2b579a; border-bottom: 2px solid #2b579a; overflow: hidden; }

/* title bar */
.titlebar { display: grid; grid-template-columns: 1fr auto 1fr; align-items: center; height: 41px; background: #2b579a; color: #fff; flex: none; }
.qat { display: flex; align-items: center; padding-left: 27px; }
.q1 { margin-right: 16px; } .q2 { margin-right: 4px; } .q3 { margin-right: 17px; } .q4 { margin-right: 22px; }
.wh { fill: none; stroke: #fff; stroke-width: 1; }
.wh2 { fill: none; stroke: #fff; stroke-width: 2; }
.doctitle { font-size: 15px; letter-spacing: .6px; word-spacing: 1px; white-space: nowrap; padding-bottom: 2px; }
.winctl { display: flex; align-items: center; justify-content: flex-end; padding-right: 22px; }
.login { width: 66px; height: 23px; border: 0; padding: 0; background: #fff; color: #2b579a; font: inherit; font-size: 15px; line-height: 23px; margin-right: 29px; }
.w1 { margin-right: 43px; } .w2 { margin-right: 42px; } .w3 { margin-right: 43px; }

/* tabs */
.tabs { display: flex; align-items: stretch; height: 40px; background: #2b579a; color: #fff; flex: none; padding-left: 8px; position: relative; }
.tab { display: flex; align-items: center; justify-content: center; font-size: 15.500px; padding-bottom: 2px; }
.t1 { width: 58px; } .t2 { width: 46px; margin-left: 6px; } .t3 { width: 55px; } .t4 { width: 74px; } .t5 { width: 84px; } .t6 { width: 60px; } .t7 { width: 55px; } .t8 { width: 57px; } .t9 { width: 58px; } .t10 { width: 70px; } .t11 { width: 113px; font-size: 15px; letter-spacing: -.2px; }
.active { background: #f1f1f1; color: #2b579a; }
.tell { display: flex; align-items: center; gap: 7px; margin-left: 11px; padding-bottom: 2px; letter-spacing: .9px; }
.share { display: flex; align-items: center; gap: 6px; margin-left: auto; margin-right: 24px; padding-bottom: 2px; font-size: 16px; }

/* ribbon */
.ribbon { display: flex; align-items: stretch; height: 113px; background: #f1f1f1; border-bottom: 1px solid #cfcfcf; padding-top: 3px; flex: none; }
.group { display: flex; flex-direction: column; position: relative; }
.group::after { content: ""; position: absolute; right: 0; top: 2px; bottom: 5px; width: 1px; background: #d6d6d6; }
.g1 { width: 158px; } .g2 { width: 59px; } .g3 { width: 438px; } .g4 { width: 245px; } .g5 { width: 59px; } .g6 { width: 160px; } .g7 { width: 158px; } .g8 { width: 391px; } .g9 { width: 109px; }
.btns { display: flex; height: 84px; }
.p3 { padding-left: 3px; } .p4 { padding-left: 4px; } .p5 { padding-left: 5px; } .p9 { padding-left: 9px; }
.gl { text-align: center; font-size: 15px; line-height: 20px; margin-top: 4px; }
.btn { display: flex; flex-direction: column; align-items: center; flex: none; text-align: center; }
.b46 { width: 46px; } .b48 { width: 48px; } .b49 { width: 49px; } .b50 { width: 50px; } .b51 { width: 51px; } .b52 { width: 52px; } .b54 { width: 54px; } .b56 { width: 56px; } .b58 { width: 58px; } .b62 { width: 62px; } .b63 { width: 63px; } .b64 { width: 64px; } .b66 { width: 66px; } .b80 { width: 80px; }
.ic { display: block; width: 48px; height: 45px; flex: none; }
.lb { display: block; font-size: 15px; line-height: 20px; white-space: nowrap; }
.lat2 { letter-spacing: -.3px; }
.sel { background: #c6c6c6; }
.off { color: #b1b1b1; }
.caret { display: inline-block; width: 0; height: 0; border-left: 3px solid transparent; border-right: 3px solid transparent; border-top: 3px solid #666; vertical-align: middle; }
.caret.white { border-top-color: #fff; }
.ml { margin-left: 5px; } .ml2 { margin-left: 10px; } .ml3 { margin-left: 12px; }
.col170 { width: 170px; display: flex; flex-direction: column; padding-top: 4px; flex: none; }
.srow { display: flex; align-items: center; gap: 3px; height: 37px; white-space: nowrap; }
.col3 { display: flex; flex-direction: column; flex: none; margin-top: -3px; margin-left: 4px; }
.srow2 { display: flex; align-items: center; gap: 4px; height: 27.500px; white-space: nowrap; }
.st { font-size: 15px; letter-spacing: .6px; word-spacing: 2px; }
.lat { margin-left: -6px; margin-right: -6px; }
.wiki { font-family: "Liberation Serif", serif; font-size: 30px; line-height: 45px; color: #222; text-align: center; }
.sym { font-family: "Liberation Serif", serif; font-weight: bold; font-size: 50px; line-height: 40px; color: #4a7fb8; text-align: center; }
.pi { font-size: 62px; line-height: 36px; }
.wa { font-family: "Noto Sans CJK KR", sans-serif; font-weight: bold; font-size: 38px; line-height: 42px; color: #4a7fb8; text-align: center; transform: skewX(-14deg); }
.pg { fill: #fff; stroke: #8a8a8a; }
.blue { fill: none; stroke: #4a7fb8; stroke-width: 1.500; }
.gr { fill: none; stroke: #b4b4b4; }
.wl { fill: none; stroke: #fff; stroke-width: 1; }
.gb { fill: none; stroke: #4a7fb8; }
.gbg { fill: none; stroke: #c4c4c4; }
.thin { fill: none; stroke: #a0a0a0; stroke-width: 1; }
.thg { fill: none; stroke: #cfcfcf; }
.dash { fill: #fff; stroke: #a6a6a6; stroke-dasharray: 2 2; }
.dashg { fill: none; stroke: #c4c4c4; stroke-width: 3; stroke-dasharray: 2 2; }
.red { fill: none; stroke: #d0583a; stroke-width: 1; }
.ga { font-size: 14px; fill: #4a7fb8; }
.ga2 { font-size: 19px; fill: #c8c8c8; font-weight: bold; }
.hash { font-size: 17px; fill: #4a7fb8; font-weight: bold; text-anchor: middle; }
.collapse { margin-left: 18px; margin-top: 94px; flex: none; }

/* document */
.docarea { flex: 1; min-height: 0; padding: 23px 0 0 49px; overflow: hidden; }
.page { position: relative; width: 1758px; height: 100%; background: #fff; border: 1px solid #c6c6c6; border-bottom: 0; padding: 263px 0 0 23px; color: #2a2a2a; letter-spacing: 0; word-spacing: 0; }
.crop { position: absolute; width: 15px; height: 30px; top: 224px; }
.cropl { left: 0; border-right: 1px solid #a6a6a6; border-bottom: 1px solid #a6a6a6; }
.cropr { left: 1503px; width: 30px; border-left: 1px solid #a6a6a6; border-bottom: 1px solid #a6a6a6; }
.mark { font-size: 12px; line-height: 16px; height: 15px; margin-left: -7px; color: #777; }
.head { margin: 0 0 32px; font-size: 22px; line-height: 26px; font-weight: 400; color: #222; }
.ln { margin: 0; height: 42px; line-height: 42px; font-size: 14px; letter-spacing: 1px; }
.mark2 { font-size: 11px; color: #777; margin-left: 1px; }

/* status bar */
.status { display: flex; align-items: center; height: 27px; flex: none; background: #f1f1f1; border-top: 1px solid #c6c6c6; font-size: 15px; padding-left: 8px; letter-spacing: .4px; word-spacing: 1px; }
.s2 { margin-left: 20px; } .s3 { margin-left: 18px; } .s4 { margin-left: 18px; }
.gi { fill: none; stroke: #666; stroke-width: 1; }
.sright { display: flex; align-items: center; align-self: stretch; margin-left: auto; padding-right: 22px; letter-spacing: .2px; }
.viewsel { display: flex; align-items: center; justify-content: center; width: 42px; background: #c6c6c6; align-self: stretch; margin: 0 13px; }
.zm { font-size: 20px; line-height: 20px; margin-left: 16px; color: #555; }
.slider { position: relative; width: 124px; height: 1px; background: #8a8a8a; margin-left: 4px; }
.thumb { position: absolute; left: 60px; top: -7px; width: 6px; height: 15px; background: #666; }
.zp { font-size: 20px; line-height: 20px; margin-left: 5px; color: #555; }
.pct { margin-left: 9px; }

/* shapes menu */
.menu { position: absolute; left: 322px; top: 170px; width: 316px; padding: 0 1px; background: #fff; border: 1px solid #c6c6c6; box-shadow: 1px 2px 4px rgba(0, 0, 0, .2); }
.mh { height: 27px; line-height: 25px; background: #e9e9e9; padding-left: 9px; font-weight: 500; font-size: 14.500px; letter-spacing: 1px; word-spacing: 2px; color: #5e5e5e; }
.mg { display: grid; grid-template-columns: repeat(12, 26px); grid-auto-rows: 26px; }
.sh { display: block; width: 26px; height: 26px; fill: none; stroke: #6e6e6e; stroke-width: 1; }
.gt { font-size: 8px; fill: #3a76b0; stroke: none; font-weight: bold; }
.nt { font-size: 7px; fill: #6e6e6e; stroke: none; }
.dot { stroke-dasharray: 1 1.500; }
.ring { stroke-width: 2.500; stroke-dasharray: 1.400 2; }
.mf { display: flex; align-items: center; height: 33px; border-top: 1px solid #dcdcdc; padding: 0 0 3px 6px; color: #7a7a7a; font-size: 15px; letter-spacing: .6px; gap: 9px; }
.fi { flex: none; overflow: visible; }
.fg { font-size: 13px; fill: #3a76b0; font-weight: bold; }
```
